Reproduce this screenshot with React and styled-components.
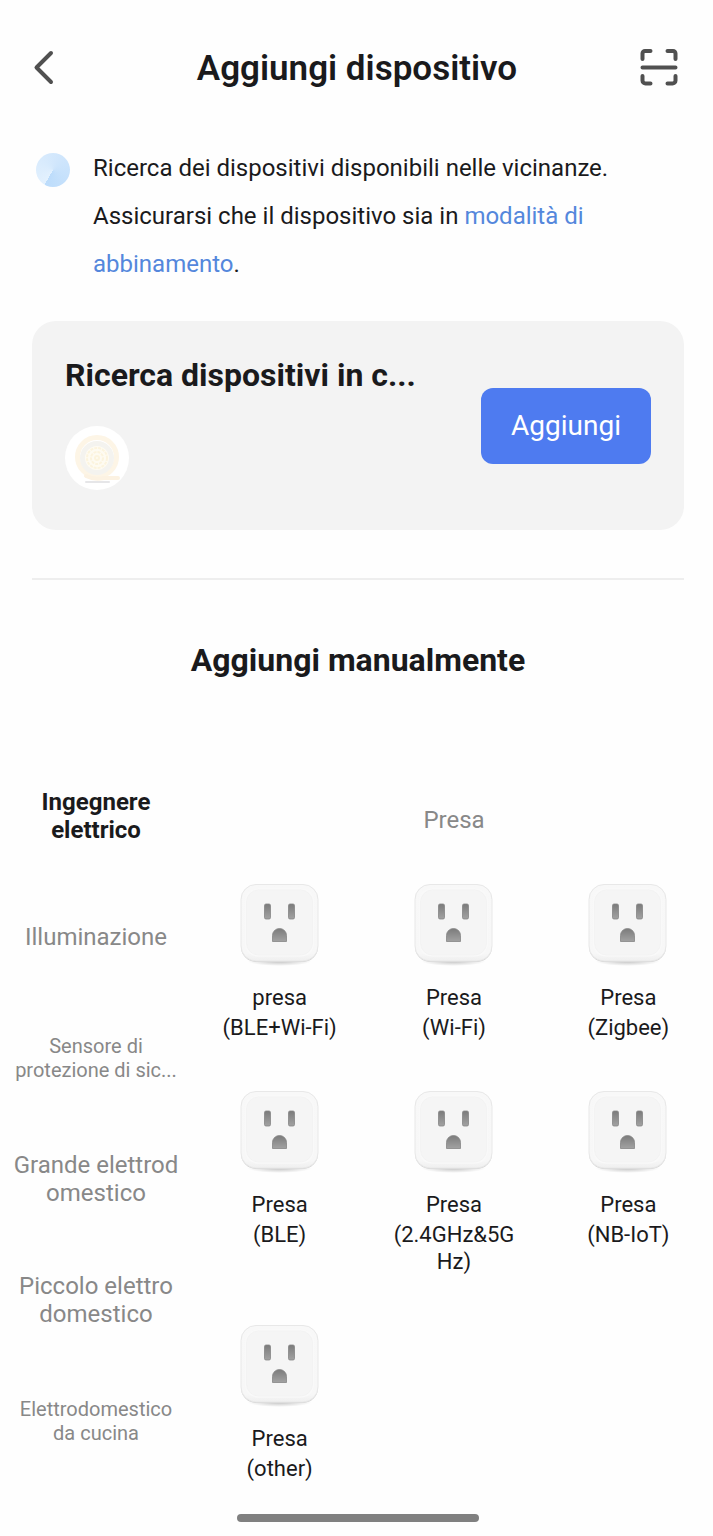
import React from "react";
import styled, { createGlobalStyle } from "styled-components";

const categories = [
  { lines: ["Ingegnere", "elettrico"], active: true },
  { lines: ["Illuminazione"] },
  { lines: ["Sensore di", "protezione di sic..."], small: true },
  { lines: ["Grande elettrod", "omestico"] },
  { lines: ["Piccolo elettro", "domestico"] },
  { lines: ["Elettrodomestico", "da cucina"], small: true },
];

const devices = [
  { name: "presa", type: "(BLE+Wi-Fi)" },
  { name: "Presa", type: "(Wi-Fi)" },
  { name: "Presa", type: "(Zigbee)" },
  { name: "Presa", type: "(BLE)" },
  { name: "Presa", type: "(2.4GHz&5GHz)" },
  { name: "Presa", type: "(NB-IoT)" },
  { name: "Presa", type: "(other)" },
];

function BackIcon() {
  return (
    <svg width="24" height="40" viewBox="0 0 24 40" fill="none" stroke="#505050" strokeWidth="4" strokeLinecap="round" strokeLinejoin="round">
      <path d="M19 6 4.500 20.500 19 35" />
    </svg>
  );
}

function ScanIcon() {
  return (
    <svg width="40" height="40" viewBox="0 0 40 40" fill="none" stroke="#505050" strokeWidth="4" strokeLinecap="round" strokeLinejoin="round">
      <path d="M3.500 12V6.500a2.500 2.500 0 0 1 2.500-2.500H11.500M28.500 4h5.500a2.500 2.500 0 0 1 2.500 2.500V12M36.500 29v4.500a3 3 0 0 1-3 3H28.500M11.500 36.500H6.500a3 3 0 0 1-3-3v-4.500M3.500 20.500h33" />
    </svg>
  );
}

function StripIcon() {
  return (
    <svg width="64" height="64" viewBox="0 0 64 64" fill="none">
      <path d="M21 56h23" stroke="#e6e6e8" strokeWidth="2" strokeLinecap="round" />
      <circle cx="32" cy="31" r="19.500" stroke="#fdf5e6" strokeWidth="5" />
      <path d="M21 50q8 4 18 2h14" stroke="#fcf2e2" strokeWidth="4" strokeLinecap="round" />
      <circle cx="32" cy="32" r="14.500" fill="#fefbf2" stroke="#f4f3ef" strokeWidth="5" />
      <circle cx="32" cy="32" r="10" stroke="#fcf4de" strokeWidth="2" strokeDasharray="3 1" />
      <circle cx="32" cy="32" r="6" stroke="#fcf4de" strokeWidth="2" strokeDasharray="3 1" />
      <circle cx="32" cy="32" r="2" stroke="#fcf4de" strokeWidth="2" />
    </svg>
  );
}

function SocketIcon() {
  return (
    <svg width="84" height="86" viewBox="0 0 84 86">
      <defs>
        <linearGradient id="shell" x1="0" y1="0" x2="0" y2="1">
          <stop offset="0" stopColor="#f8f8f8" />
          <stop offset="0.9" stopColor="#f7f7f7" />
          <stop offset="1" stopColor="#efefef" />
        </linearGradient>
        <linearGradient id="hole" x1="0" y1="0" x2="0" y2="1">
          <stop offset="0" stopColor="#7b7b7b" />
          <stop offset="1" stopColor="#a2a2a2" />
        </linearGradient>
        <radialGradient id="shade">
          <stop offset="0" stopColor="#000" stopOpacity="0.25" />
          <stop offset="1" stopColor="#000" stopOpacity="0" />
        </radialGradient>
      </defs>
      <ellipse cx="41.500" cy="78" rx="32" ry="5" fill="url(#shade)" />
      <rect x="3" y="2" width="77" height="77" rx="15" fill="#d4d4d4" />
      <rect x="3" y="1.500" width="77" height="76.500" rx="15" fill="url(#shell)" stroke="#e8e8e8" />
      <rect x="8" y="6.500" width="67" height="66" rx="12" fill="#f5f5f5" stroke="#f9f9f9" strokeWidth="2" />
      <rect x="8.500" y="7" width="66" height="65" rx="12" fill="none" stroke="#efefef" strokeWidth="0.600" />
      <rect x="26.500" y="21" width="6" height="15" rx="1.500" fill="url(#hole)" stroke="#858585" strokeWidth="0.800" />
      <rect x="50.500" y="21" width="6" height="15" rx="1.500" fill="url(#hole)" stroke="#858585" strokeWidth="0.800" />
      <path d="M34.500 58.500v-6a7 7 0 0 1 14 0v6z" fill="url(#hole)" stroke="#858585" strokeWidth="0.800" strokeLinejoin="round" />
    </svg>
  );
}

function App() {
  return (
    <Page>
      <GlobalStyle />
      <Header>
        <IconButton aria-label="Indietro"><BackIcon /></IconButton>
        <Title>Aggiungi dispositivo</Title>
        <IconButton aria-label="Scansiona" $end><ScanIcon /></IconButton>
      </Header>

      <Search>
        <Radar />
        <SearchText>
          Ricerca dei dispositivi disponibili nelle vicinanze. Assicurarsi che il dispositivo sia in{" "}
          <a href="#abbinamento">modalità di abbinamento</a>.
        </SearchText>
      </Search>

      <Found>
        <FoundInfo>
          <FoundTitle>Ricerca dispositivi in c...</FoundTitle>
          <Thumb><StripIcon /></Thumb>
        </FoundInfo>
        <AddButton>Aggiungi</AddButton>
      </Found>

      <Divider />
      <SectionTitle>Aggiungi manualmente</SectionTitle>

      <Catalog>
        <Sidebar>
          {categories.map((item) => (
            <Category key={item.lines[0]} $active={item.active} $small={item.small}>
              {item.lines.map((line) => <span key={line}>{line}</span>)}
            </Category>
          ))}
        </Sidebar>
        <Main>
          <GroupTitle>Presa</GroupTitle>
          <Grid>
            {devices.map((device) => (
              <Device key={device.type}>
                <SocketIcon />
                <DeviceName>{device.name}</DeviceName>
                <DeviceName>{device.type}</DeviceName>
              </Device>
            ))}
          </Grid>
        </Main>
      </Catalog>

      <Footer>
        <HomeBar />
      </Footer>
    </Page>
  );
}

const GlobalStyle = createGlobalStyle`
  * {
    box-sizing: border-box;
  }
  body {
    margin: 0;
    background: #fefefe;
    color: #1a1a1c;
    font-family: Roboto, "Liberation Sans", sans-serif;
  }
  button {
    font-family: inherit;
    border: 0;
    cursor: pointer;
  }
`;

const Page = styled.div`
  display: flex;
  flex-direction: column;
  min-height: 100vh;
`;

const Header = styled.header`
  display: flex;
  align-items: flex-start;
  padding: 47px 34px 0 32px;
`;

const IconButton = styled.button`
  display: flex;
  width: 40px;
  padding: 0;
  background: none;
  justify-content: ${(props) => (props.$end ? "flex-end" : "flex-start")};
`;

const Title = styled.h1`
  flex: 1;
  margin: 0;
  padding-left: 3px;
  font-size: 35px;
  font-weight: 600;
  line-height: 44px;
  text-align: center;
`;

const Search = styled.section`
  display: flex;
  gap: 23px;
  padding: 53px 32px 0 36px;
`;

const Radar = styled.div`
  flex: none;
  width: 34px;
  height: 34px;
  margin-top: 9px;
  border-radius: 50%;
  background: conic-gradient(from 210deg, #e3f1fe, #d0e6fc 50%, #bcdcfb);
`;

const SearchText = styled.p`
  margin: 0;
  font-size: 24px;
  line-height: 48px;

  a {
    color: #5487dc;
    text-decoration: none;
  }
`;

const Found = styled.section`
  display: flex;
  align-items: center;
  justify-content: space-between;
  gap: 60px;
  margin: 33px 29px 0 32px;
  padding: 36px 33px;
  border-radius: 24px;
  background: #f3f3f3;
`;

const FoundInfo = styled.div`
  flex: 1;
  min-width: 0;
  padding-bottom: 4px;
`;

const FoundTitle = styled.h2`
  margin: 0 0 33px;
  font-size: 32px;
  font-weight: 700;
  line-height: 36px;
  white-space: nowrap;
`;

const Thumb = styled.div`
  width: 64px;
  height: 64px;
  border-radius: 50%;
  background: #fff;
`;

const AddButton = styled.button`
  width: 170px;
  height: 76px;
  border-radius: 12px;
  background: #4e7bf0;
  color: #fff;
  font-size: 28px;
`;

const Divider = styled.hr`
  width: auto;
  height: 2px;
  margin: 48px 29px 0 32px;
  border: 0;
  background: #eeeeee;
`;

const SectionTitle = styled.h2`
  margin: 60px 0 75px;
  padding-left: 3px;
  font-size: 32px;
  font-weight: 700;
  line-height: 40px;
  text-align: center;
`;

const Catalog = styled.div`
  display: flex;
`;

const Sidebar = styled.nav`
  flex: none;
  width: 192px;
`;

const Category = styled.button`
  display: flex;
  flex-direction: column;
  align-items: center;
  justify-content: center;
  width: 100%;
  height: 121px;
  padding: 0;
  background: none;
  white-space: nowrap;
  color: ${(props) => (props.$active ? "#1a1a1c" : "#888")};
  font-size: ${(props) => (props.$small ? "20px" : "24px")};
  font-weight: ${(props) => (props.$active ? 700 : 400)};
  line-height: ${(props) => (props.$small ? "24px" : "28px")};
`;

const Main = styled.main`
  flex: 1;
  padding-left: 3px;
`;

const GroupTitle = styled.h3`
  margin: 51px 0 49px;
  color: #888;
  font-size: 24px;
  font-weight: 400;
  line-height: 28px;
  text-align: center;
`;

const Grid = styled.div`
  display: grid;
  grid-template-columns: repeat(3, 1fr);
  column-gap: 5px;
  row-gap: 49px;
`;

const Device = styled.button`
  display: flex;
  flex-direction: column;
  align-items: center;
  justify-content: flex-start;
  gap: 3px;
  padding: 0 20px;
  background: none;
  color: #1a1a1c;

  svg {
    margin-bottom: 12px;
  }
`;

const DeviceName = styled.span`
  width: 100%;
  font-size: 22px;
  line-height: 27px;
  word-break: break-all;
`;

const Footer = styled.footer`
  padding: 32px 29px 14px 32px;
`;

const HomeBar = styled.div`
  width: 37%;
  height: 8px;
  margin: 0 auto;
  border-radius: 4px;
  background: #808080;
`;

export default App;
